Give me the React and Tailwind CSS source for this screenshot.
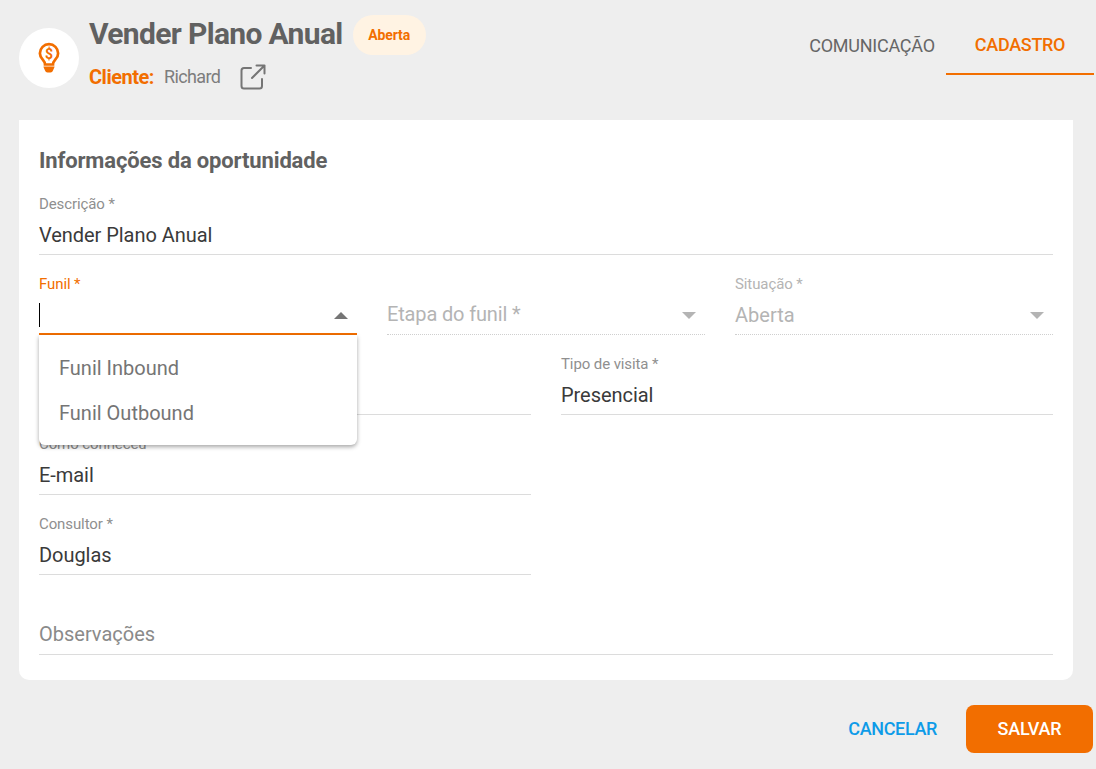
import React from "react";

const font = { fontFamily: "Roboto, sans-serif" };

const Field = ({ label, value, className = "" }) => (
  <div className={`h-20 flex flex-col justify-end ${className}`}>
    <label className="h-4 text-[15px] leading-4 tracking-[-0.1px] text-[#8f8f8f]">{label}</label>
    <div className="mt-[9px] h-[34px] border-b border-[#dcdcdc] text-[20px] leading-[28px] tracking-[-0.05px] text-[#3a3a3a]">{value}</div>
  </div>
);

const DisabledSelect = ({ label, value }) => (
  <div className="flex-1 h-20 flex flex-col justify-end">
    {label && <label className="text-[15px] leading-4 tracking-[-0.1px] text-[#b4b4b4]">{label}</label>}
    <div className={`relative h-[34px] border-b border-dotted border-[#cfcfcf] text-[20px] text-[#b4b4b4] ${label ? "mt-[9px] leading-[28px]" : "leading-[26px] tracking-[-0.15px]"}`}>
      {value}
      <span className="absolute right-[9px] top-[11px] border-x-[7px] border-t-[7px] border-x-transparent border-t-[#b4b4b4]" />
    </div>
  </div>
);

export default function App() {
  return (
    <div className="h-[769px] w-[1096px] overflow-hidden bg-[#eeeeee]" style={font}>
      {/* Header */}
      <div className="flex h-[120px] pl-[19px] pr-[2px]">
        <div className="mt-[28px] flex h-[60px] w-[60px] items-center justify-center rounded-full bg-white">
          <svg width="24" height="32" viewBox="0 0 24 32" fill="none">
            <path d="M8 22.500c0-2.500-1.300-3.800-2.800-5.600A9.300 9.300 0 0 1 2.900 11.300a9.100 9.100 0 0 1 18.200 0c0 2.100-.8 4-2.300 5.600-1.500 1.800-2.800 3.100-2.800 5.600z" stroke="#f26e00" strokeWidth="2.700" />
            <path d="M6.500 24.500h11v.5l-1.500 3.500a3 3 0 0 1-2.500 2h-3a3 3 0 0 1-2.500-2L6.500 25z" fill="#f26e00" />
            <text x="12" y="16.500" textAnchor="middle" fontSize="14" fontWeight="700" fill="#f26e00" fontFamily="Roboto, sans-serif">$</text>
          </svg>
        </div>
        <div className="ml-[10px] mt-[15px]">
          <div className="flex items-start">
            <h1 className="h-[40px] text-[30px] leading-[38px] font-bold tracking-[-0.65px] text-[#616161]">Vender Plano Anual</h1>
            <span className="ml-[10px] flex h-[40px] w-[73px] items-center justify-center rounded-[20px] bg-[#fff3e3] text-[14px] font-bold tracking-[-0.1px] text-[#f26e00]">Aberta</span>
          </div>
          <div className="mt-[8px] flex items-center">
            <span className="text-[20px] font-bold leading-[28px] tracking-[-0.5px] text-[#f26e00]">Cliente:</span>
            <span className="ml-[10px] text-[18px] leading-[28px] tracking-[-0.6px] text-[#7d7d7d]">Richard</span>
            <svg className="ml-[20px]" width="26" height="26" viewBox="0 0 26 26" fill="none" stroke="#757575" strokeWidth="2" strokeLinecap="round" strokeLinejoin="round">
              <path d="M11 4H4a2.500 2.500 0 0 0-2.500 2.500V22A2.500 2.500 0 0 0 4 24.500h15.500A2.500 2.500 0 0 0 22 22v-7" />
              <path d="M12 14 24.500 1.500M16.500 1.500h8v8" />
            </svg>
          </div>
        </div>
        <div className="ml-auto flex h-[75px] items-start">
          <div className="flex h-[75px] w-[148px] items-center justify-center pt-[15px] text-[18px] tracking-[-0.25px] text-[#666666]">COMUNICAÇÃO</div>
          <div className="flex h-[75px] w-[148px] items-center justify-center border-b-2 border-[#f26e00] pt-[15px] text-[18px] font-medium tracking-[-0.3px] text-[#f26e00]">CADASTRO</div>
        </div>
      </div>

      {/* Card */}
      <div className="ml-[19px] h-[560px] w-[1054px] rounded-b-[10px] bg-white px-[20px] pt-[27px]">
        <h2 className="text-[22px] font-bold leading-[28px] tracking-[-0.15px] text-[#616161]">Informações da oportunidade</h2>
        <Field label="Descrição *" value="Vender Plano Anual" />

        <div className="relative flex gap-[30px]">
          <div className="flex-1 h-20 flex flex-col justify-end">
            <label className="text-[15px] leading-4 tracking-[-0.1px] text-[#f26e00]">Funil *</label>
            <div className="relative mt-[8px] h-[35px] border-b-2 border-[#f26e00]">
              <span className="absolute left-0 top-[3px] h-6 w-px bg-black" />
              <span className="absolute right-[9px] top-[12px] border-x-[7px] border-b-[7px] border-x-transparent border-b-[#757575]" />
            </div>
          </div>
          <DisabledSelect value="Etapa do funil *" />
          <DisabledSelect label="Situação *" value="Aberta" />

          <div className="absolute left-0 top-[80px] z-10 h-[110px] w-[318px] rounded-b-[6px] bg-white py-[10px] shadow-[0_2px_4px_rgba(0,0,0,0.35)]">
            <div className="flex h-[45px] items-center px-[20px] text-[20px] text-[#757575]">Funil Inbound</div>
            <div className="flex h-[45px] items-center px-[20px] text-[20px] text-[#757575]">Funil Outbound</div>
          </div>
        </div>

        <div className="flex gap-[30px]">
          <Field label="" value="" className="w-[492px]" />
          <Field label="Tipo de visita *" value="Presencial" className="flex-1" />
        </div>
        <Field label="Como conheceu" value="E-mail" className="w-[492px]" />
        <Field label="Consultor *" value="Douglas" className="w-[492px]" />
        <div className="h-20 flex flex-col justify-end">
          <div className="h-[35px] border-b border-[#dcdcdc] text-[20px] leading-[28px] text-[#8a8a8a]">Observações</div>
        </div>
      </div>

      {/* Footer */}
      <div className="mt-[25px] flex items-center justify-end pr-[3px]">
        <button className="mr-[29px] pb-[2px] text-[18px] font-medium tracking-[-0.35px] text-[#0d9be8]">CANCELAR</button>
        <button className="h-[48px] w-[127px] rounded-[8px] bg-[#f26e00] pb-[2px] text-[18px] font-medium tracking-[-0.2px] text-white">SALVAR</button>
      </div>
    </div>
  );
}
